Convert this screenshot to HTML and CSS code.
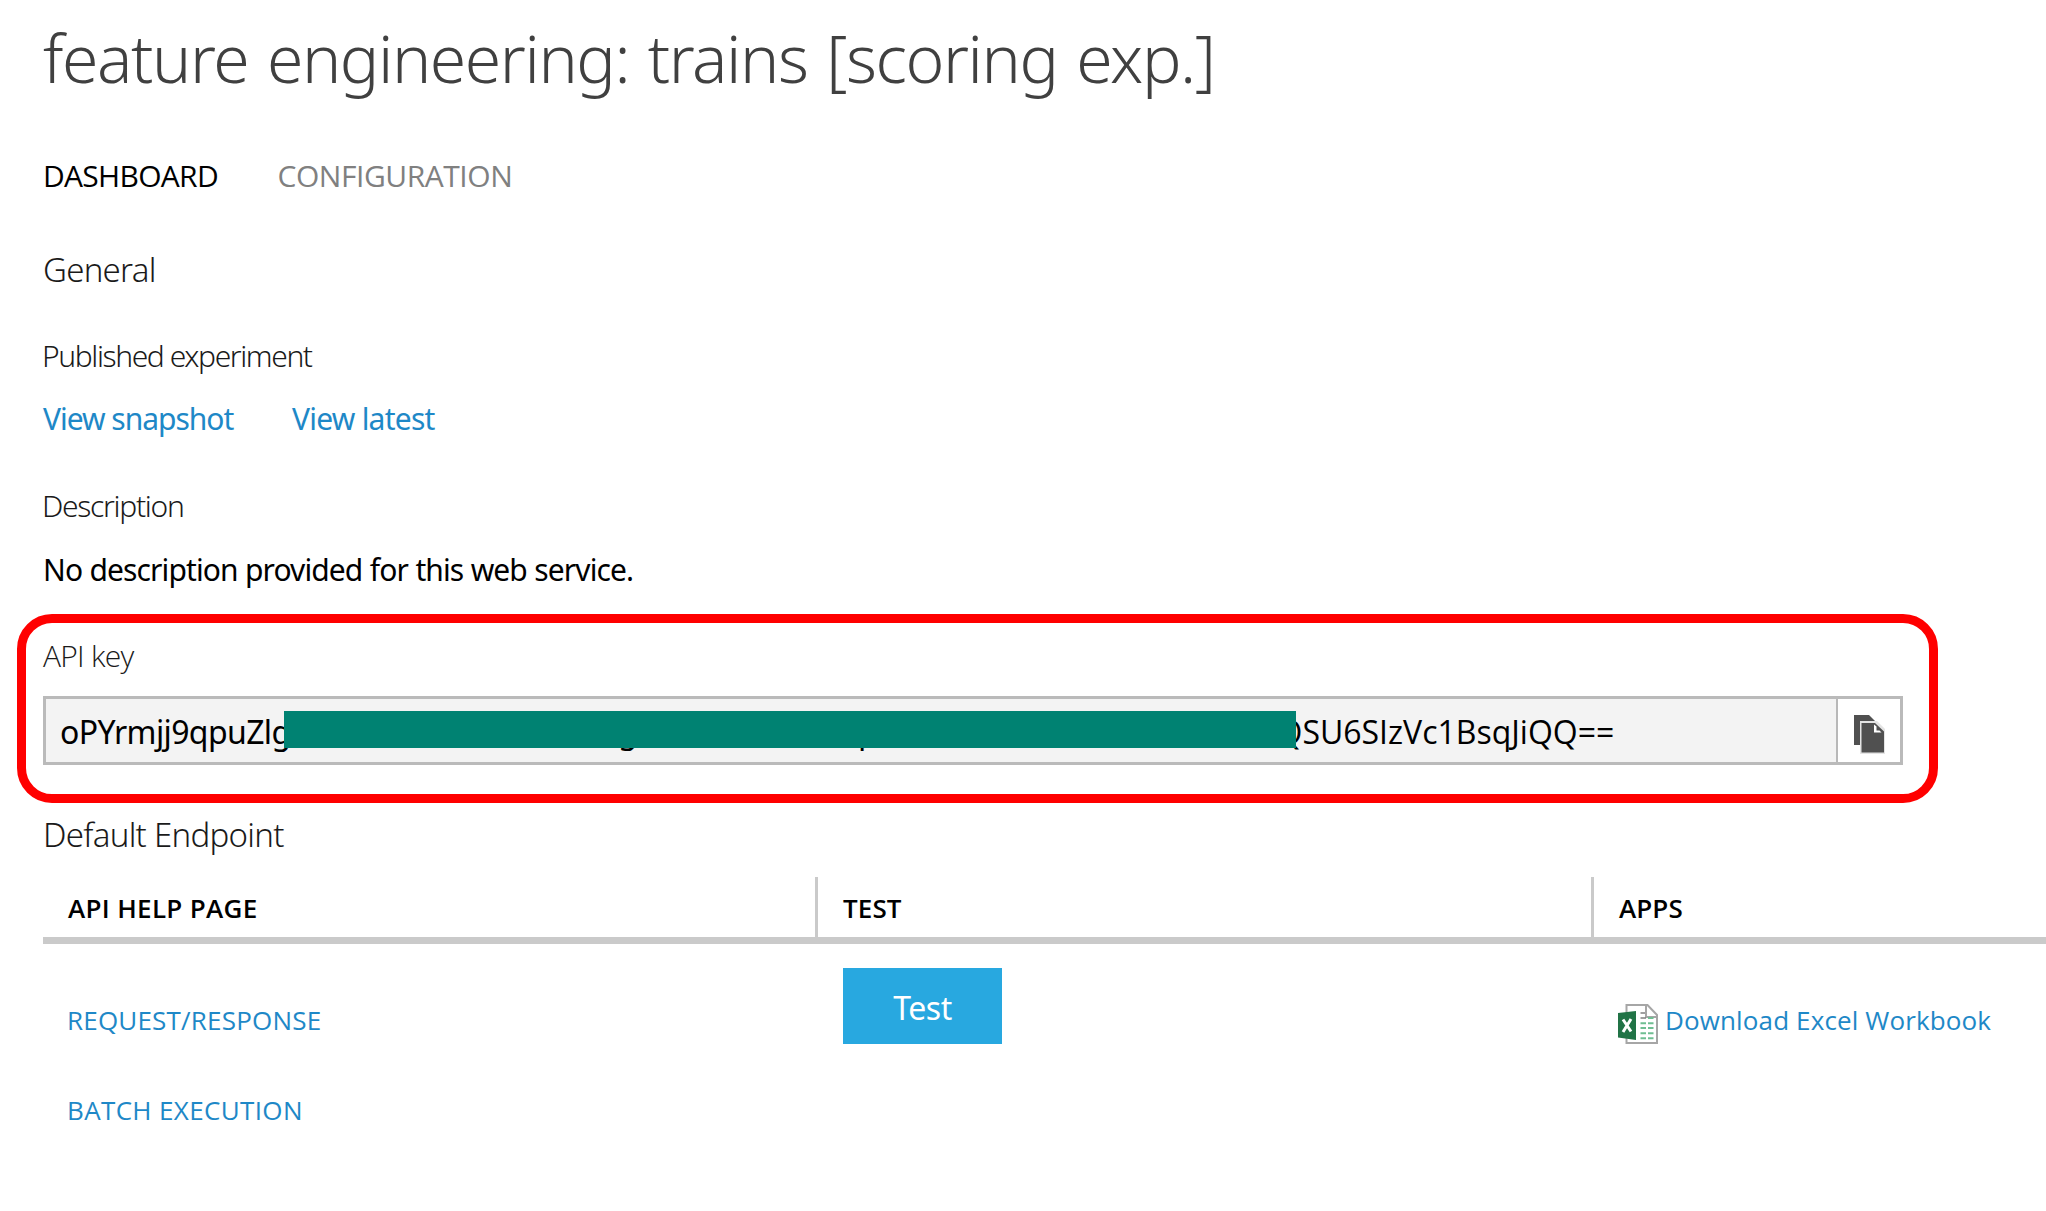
FILE: index.html
```html
<!DOCTYPE html>
<html lang="en">
<head>
<meta charset="utf-8">
<title>feature engineering: trains [scoring exp.]</title>
<link rel="stylesheet" href="styles.css">
</head>
<body>
<main class="page">
  <h1 class="title">feature engineering: trains [scoring exp.]</h1>
  <nav class="tabs">
    <a class="tab tab-active">DASHBOARD</a>
    <a class="tab">CONFIGURATION</a>
  </nav>
  <h2 class="section">General</h2>
  <h3 class="label label-published">Published experiment</h3>
  <div class="links">
    <a class="link">View snapshot</a>
    <a class="link link-latest">View latest</a>
  </div>
  <h3 class="label label-description">Description</h3>
  <p class="description">No description provided for this web service.</p>

  <section class="callout">
    <h3 class="label label-key">API key</h3>
    <div class="key-row">
      <div class="key-field">
        <span class="key-start">oPYrmjj9qpuZlg</span>
        <span class="key-end">QSU6SIzVc1BsqJiQQ==</span>
        <span class="peek peek-g">g</span>
        <span class="peek peek-p">p</span>
        <span class="redaction"></span>
      </div>
      <button class="copy" aria-label="Copy">
        <svg width="32" height="40" viewBox="0 0 32 40">
          <path d="M1 1H16L22 7V31H1Z" fill="#505050"/>
          <path d="M7 7H24L32 15V40H7Z" fill="#e4e4e4"/>
          <path d="M8.5 9H22L31 17.500V38.500H8.500Z" fill="#505050"/>
          <path d="M21 10.500V18.500H28.500L26.500 16.500H23.500V12.500Z" fill="#fff"/>
        </svg>
      </button>
    </div>
  </section>

  <h2 class="section section-endpoint">Default Endpoint</h2>
  <div class="table">
    <div class="table-head">
      <div class="th th-help">API HELP PAGE</div>
      <div class="th">TEST</div>
      <div class="th">APPS</div>
    </div>
    <div class="table-body">
      <div class="td td-help">
        <a class="api-link">REQUEST/RESPONSE</a>
        <a class="api-link api-link-batch">BATCH EXECUTION</a>
      </div>
      <div class="td"><button class="test">Test</button></div>
      <div class="td td-apps">
        <svg class="excel" width="40" height="40" viewBox="0 0 40 40">
          <path d="M8.500 1H29.500L39 11V39H8.500Z" fill="#fff" stroke="#a6a6a6" stroke-width="2"/>
          <path d="M28 1V13H39" fill="none" stroke="#a6a6a6" stroke-width="2"/>
          <path d="M22.500 9H27M22.500 14H28" stroke="#808080" stroke-width="1.500"/>
          <path d="M22.500 19.200H28M30 19.200H35.500M22.500 24H28M30 24H35.500M22.500 29.200H28M30 29.200H35.500M22.500 34.200H28M30 34.200H35.500M30 14H35.500" stroke="#6fbe92" stroke-width="2"/>
          <path d="M0 9L18 7V36L0 33.500Z" fill="#217346"/>
          <path d="M5 15.500L13 27.500M13 15L5 28" stroke="#fff" stroke-width="3"/>
        </svg>
        <a class="api-link api-link-excel">Download Excel Workbook</a>
      </div>
    </div>
  </div>
</main>
</body>
</html>
```
FILE: styles.css
```css
* { box-sizing: border-box; }

body {
  margin: 0;
  background: #fff;
  color: #000;
  font-family: "Noto Sans", "Open Sans", sans-serif;
  overflow: hidden;
}

h1, h2, h3, p { margin: 0; white-space: nowrap; }

button { border: 0; padding: 0; font-family: inherit; }

.page {
  display: flex;
  flex-direction: column;
  height: 1211px;
  padding-top: 12px;
}

.title {
  margin-left: 43px;
  font-size: 66px;
  font-weight: 300;
  line-height: 90px;
  letter-spacing: -1.420px;
  word-spacing: 3px;
  color: #404040;
}

.tabs {
  display: flex;
  margin: 54px 0 0 43px;
  font-family: "Open Sans", sans-serif;
  font-size: 30px;
  line-height: 40px;
}

.tab { color: #808080; letter-spacing: -0.450px; }
.tab-active { width: 234.500px; color: #000; letter-spacing: -0.700px; }

.section {
  margin: 52px 0 0 43px;
  font-size: 33px;
  font-weight: 300;
  line-height: 44px;
  letter-spacing: -0.720px;
  color: #1a1a1a;
}

.label {
  margin-left: 42px;
  font-size: 30px;
  font-weight: 300;
  line-height: 40px;
  letter-spacing: -1.400px;
  color: #1a1a1a;
}

.label-published { margin-top: 44px; }
.label-description { margin-top: 47px; letter-spacing: -1.300px; }

.links {
  display: flex;
  margin: 23px 0 0 43px;
  font-size: 30px;
  line-height: 40px;
  letter-spacing: -1.020px;
  color: #1e88c7;
}

.link { width: 249px; }
.link-latest { letter-spacing: -0.760px; }

.description {
  margin: 24px 0 0 43px;
  font-size: 30px;
  line-height: 40px;
  letter-spacing: -0.900px;
  word-spacing: 0.500px;
}

.callout {
  width: 1921px;
  height: 189px;
  margin: 24px 0 0 17px;
  padding: 13px 0 0 17px;
  border: 9px solid #f00;
  border-radius: 35px;
}

.label-key {
  margin-left: 0;
  font-family: "Open Sans", sans-serif;
  letter-spacing: -0.750px;
}

.key-row {
  display: flex;
  width: 1860px;
  height: 69px;
  margin-top: 20px;
  border: 3px solid #bababa;
}

.key-field {
  position: relative;
  display: flex;
  flex: 1;
  padding-left: 14px;
  background: #f3f3f3;
  font-size: 32px;
  line-height: 66px;
}

.key-start { width: 1217.500px; letter-spacing: -0.620px; }
.key-end { font-family: "Open Sans", sans-serif; letter-spacing: 0; }

.redaction {
  position: absolute;
  left: 238px;
  top: 12px;
  width: 1012px;
  height: 37px;
  background: #008272;
}

.peek { position: absolute; top: -1px; }
.peek-g { left: 572px; }
.peek-p { left: 812px; }

.copy {
  display: flex;
  width: 64px;
  padding: 15px 0 0 15px;
  border-left: 2px solid #b8b8b8;
  background: #fff;
}

.section-endpoint { margin-top: 10px; }

.table { margin: 20px 0 0 43px; }

.table-head, .table-body {
  display: grid;
  grid-template-columns: 772px 776px 1fr;
}

.table-head {
  height: 67px;
  border-bottom: 7px solid #cacaca;
}

.th {
  padding: 14px 0 0 25px;
  border-left: 3px solid #cacaca;
  font-family: "Open Sans", sans-serif;
  font-size: 26px;
  font-weight: 600;
  line-height: 34px;
  letter-spacing: 0.100px;
}

.th-help { border-left: 0; letter-spacing: 0.330px; }

.td { padding: 24px 0 0 28px; }

.td-help {
  display: flex;
  flex-direction: column;
  gap: 56px;
  padding: 59px 0 0 24px;
}

.api-link {
  font-family: "Open Sans", sans-serif;
  font-size: 26px;
  line-height: 34px;
  letter-spacing: 0.200px;
  color: #1e88c7;
  white-space: nowrap;
}

.api-link-batch { letter-spacing: 0.360px; }
.api-link-excel { letter-spacing: 0.130px; }

.test {
  width: 159px;
  height: 76px;
  padding-top: 2px;
  background: #28a8e0;
  color: #fff;
  font-size: 32px;
  letter-spacing: -0.480px;
}

.td-apps {
  display: flex;
  align-items: flex-start;
  gap: 7px;
  padding: 59px 0 0 27px;
}

.excel { flex: none; margin-top: 1px; }
```
